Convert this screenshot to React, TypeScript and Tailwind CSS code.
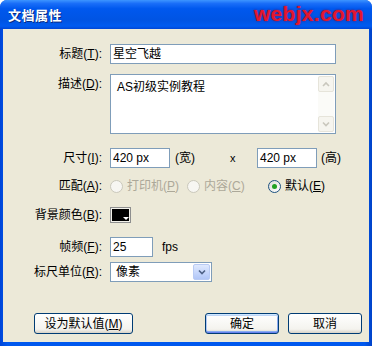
import React from 'react';

const field = 'border border-[#7f9db9] bg-white h-[20px] flex items-center';

function Label({ text, k, className = '' }: { text: string; k: string; className?: string }) {
  return (
    <span className={`w-[100px] shrink-0 text-right pr-[1px] ${className}`}>
      {text}(<u>{k}</u>):
    </span>
  );
}

function Radio({ label, k, checked, disabled }: { label: string; k: string; checked?: boolean; disabled?: boolean }) {
  return (
    <span className={`flex items-center gap-[4px] ${disabled ? 'text-[#aca899]' : 'text-black'}`}>
      <span
        className={`w-[13px] h-[13px] rounded-full border flex items-center justify-center ${
          disabled ? 'border-[#cac8bb] bg-[#f7f6f2]' : 'border-[#1c5180] bg-[linear-gradient(135deg,#dcdcd6,#ffffff)]'
        }`}
      >
        {checked && <span className="w-[5px] h-[5px] rounded-full bg-[#21a121]" />}
      </span>
      <span>
        {label}(<u>{k}</u>)
      </span>
    </span>
  );
}

function Chevron({ up, color }: { up?: boolean; color: string }) {
  return (
    <svg width="8" height="6" viewBox="0 0 8 6">
      <path d={up ? 'M1 5 L4 2 L7 5' : 'M1 1.5 L4 4.5 L7 1.5'} fill="none" stroke={color} strokeWidth="1.6" />
    </svg>
  );
}

function XpButton({ children, w, isDefault }: { children: React.ReactNode; w: string; isDefault?: boolean }) {
  return (
    <div
      className={`${w} h-[21px] rounded-[3px] border border-[#003c74] flex items-center justify-center bg-[linear-gradient(to_bottom,#ffffff,#f4f3ee_80%,#d8d2c6)] ${
        isDefault ? 'shadow-[inset_0_1px_0_#cee7ff,inset_0_2px_0_#bcd4f6,inset_0_-1px_0_#6982ee,inset_0_-2px_0_#89adf0,inset_1px_0_0_#b0c8f4,inset_-1px_0_0_#8aa8ee]' : ''
      }`}
    >
      {children}
    </div>
  );
}

export default function App() {
  return (
    <div className="w-[372px] h-[346px] bg-white font-['Liberation_Sans','Noto_Sans_CJK_SC',sans-serif] text-[12px] text-black">
      <div className="flex h-full flex-col rounded-t-[7px] bg-[linear-gradient(to_right,#0045d8,#0058ee_2%,#0058ee_98%,#0042c8)]">
        {/* Title bar */}
        <div className="h-[29px] shrink-0 flex items-center justify-between pl-[8px] pr-[8px] rounded-t-[7px] bg-[linear-gradient(to_bottom,#3d95ff_0%,#1a6ef8_12%,#0058ee_30%,#0054e3_70%,#005bf0_90%,#0046d5_100%)]">
          <span className="text-white font-bold text-[13px] tracking-[0.5px] font-['Noto_Sans_CJK_SC',sans-serif] [text-shadow:1px_1px_0_#0a2a80]">
            文档属性
          </span>
          <span className="text-[21px] leading-none font-bold text-[#e3162f] tracking-[0.3px] [text-shadow:0_0_2px_#7a0a40] mt-[-2px]">
            webjx.com
          </span>
        </div>

        {/* Client area */}
        <div className="flex-1 mx-[3px] mb-[4px] bg-[#ece9d8] flex flex-col">
          <div className="mt-[15px] flex items-center gap-[7px]">
            <Label text="标题" k="T" />
            <div className={`${field} w-[226px] pl-[2px]`}>星空飞越</div>
          </div>

          <div className="mt-[10px] flex items-start gap-[7px]">
            <Label text="描述" k="D" className="pt-[1px]" />
            <div className="w-[226px] h-[60px] border border-[#7f9db9] bg-white flex">
              <div className="flex-1 pl-[6px] pt-[3px]">AS初级实例教程</div>
              <div className="w-[16px] my-[1px] mr-[1px] flex flex-col bg-[#fbfbf8]">
                <div className="h-[16px] rounded-[2px] border border-[#e6e4da] bg-[#f6f5ef] flex items-center justify-center">
                  <Chevron up color="#c9c7bd" />
                </div>
                <div className="flex-1" />
                <div className="h-[16px] rounded-[2px] border border-[#e6e4da] bg-[#f6f5ef] flex items-center justify-center">
                  <Chevron color="#c9c7bd" />
                </div>
              </div>
            </div>
          </div>

          <div className="mt-[14px] flex items-center">
            <Label text="尺寸" k="I" />
            <div className={`${field} ml-[7px] w-[60px] pl-[2px]`}>420 px</div>
            <div className="w-[87px] flex items-center pl-[5px]">
              <span className="w-[55px]">(宽)</span>
              <span className="text-[11px]">x</span>
            </div>
            <div className={`${field} w-[60px] pl-[2px]`}>420 px</div>
            <span className="ml-[4px]">(高)</span>
          </div>

          <div className="mt-[10px] h-[16px] flex items-center gap-[7px]">
            <Label text="匹配" k="A" />
            <div className="w-[70px]">
              <Radio label="打印机" k="P" disabled />
            </div>
            <div className="w-[74px]">
              <Radio label="内容" k="C" disabled />
            </div>
            <Radio label="默认" k="E" checked />
          </div>

          <div className="mt-[12px] h-[17px] flex items-center gap-[7px]">
            <Label text="背景颜色" k="B" />
            <div className="relative w-[21px] h-[16px] border border-[#8e8f8f] bg-[#f2f1ea] p-[1px]">
              <div className="w-full h-full bg-black" />
              <svg className="absolute right-[1px] bottom-[1px]" width="6" height="4" viewBox="0 0 6 4">
                <path d="M0 0 H6 L3 3 Z" fill="#ffffff" />
              </svg>
            </div>
          </div>

          <div className="mt-[14px] flex items-center gap-[7px]">
            <Label text="帧频" k="F" />
            <div className={`${field} w-[43px] pl-[2px]`}>25</div>
            <span className="ml-[2px]">fps</span>
          </div>

          <div className="mt-[5px] flex items-center gap-[7px]">
            <Label text="标尺单位" k="R" />
            <div className={`${field} w-[102px] pl-[5px] pr-[1px] justify-between`}>
              <span>像素</span>
              <div className="w-[17px] h-[16px] rounded-[2px] border border-[#b9cbf4] bg-[linear-gradient(to_bottom,#e0e9fe,#c3d4fb_60%,#b1c6f7)] flex items-center justify-center">
                <Chevron color="#4d6185" />
              </div>
            </div>
          </div>

          <div className="mt-auto mb-[8px] flex items-center pl-[31px] pr-[7px]">
            <XpButton w="w-[99px]">
              设为默认值(<u>M</u>)
            </XpButton>
            <div className="flex-1" />
            <XpButton w="w-[74px]" isDefault>
              确定
            </XpButton>
            <div className="w-[9px]" />
            <XpButton w="w-[74px]">取消</XpButton>
          </div>
        </div>
      </div>
    </div>
  );
}
